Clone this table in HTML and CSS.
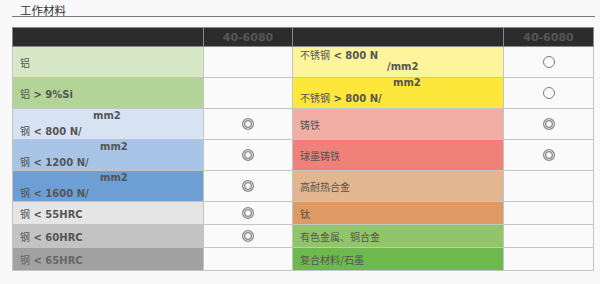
FILE: index.html
```html
<!DOCTYPE html>
<html lang="zh">
<head>
<meta charset="utf-8">
<link rel="stylesheet" href="styles.css">
</head>
<body>
<div class="page">
  <h2 class="title">工作材料</h2>
  <table class="mat">
    <colgroup><col class="c1"><col class="c2"><col class="c3"><col class="c4"></colgroup>
    <thead>
      <tr class="head"><th></th><th>40-6080</th><th></th><th>40-6080</th></tr>
    </thead>
    <tbody>
      <tr class="tall">
        <td class="al1"><span class="zh">铝</span></td>
        <td class="sym"></td>
        <td class="ss1"><span class="l1"><span class="zh">不锈钢</span> &lt; 800 N</span><span class="l2 pad-r1">/mm2</span></td>
        <td class="sym"><svg class="ic" viewBox="0 0 14 14"><circle cx="7" cy="7" r="5.5"/></svg></td>
      </tr>
      <tr class="tall">
        <td class="al2"><span class="zh">铝</span> &gt; 9%Si</td>
        <td class="sym"></td>
        <td class="ss2"><span class="up pad-r2">mm2</span><span class="dn"><span class="zh">不锈钢</span> &gt; 800 N/</span></td>
        <td class="sym"><svg class="ic" viewBox="0 0 14 14"><circle cx="7" cy="7" r="5.5"/></svg></td>
      </tr>
      <tr class="tall">
        <td class="st1"><span class="up pad-a">mm2</span><span class="dn"><span class="zh">钢</span> &lt; 800 N/</span></td>
        <td class="sym"><svg class="ic dbl" viewBox="0 0 14 14"><circle cx="7" cy="7" r="5.4"/><circle cx="7" cy="7" r="3.3"/></svg></td>
        <td class="ci1"><span class="zh">铸铁</span></td>
        <td class="sym"><svg class="ic dbl" viewBox="0 0 14 14"><circle cx="7" cy="7" r="5.4"/><circle cx="7" cy="7" r="3.3"/></svg></td>
      </tr>
      <tr class="tall">
        <td class="st2"><span class="up pad-b">mm2</span><span class="dn"><span class="zh">钢</span> &lt; 1200 N/</span></td>
        <td class="sym"><svg class="ic dbl" viewBox="0 0 14 14"><circle cx="7" cy="7" r="5.4"/><circle cx="7" cy="7" r="3.3"/></svg></td>
        <td class="ci2"><span class="zh">球墨铸铁</span></td>
        <td class="sym"><svg class="ic dbl" viewBox="0 0 14 14"><circle cx="7" cy="7" r="5.4"/><circle cx="7" cy="7" r="3.3"/></svg></td>
      </tr>
      <tr class="tall">
        <td class="st3"><span class="up pad-b">mm2</span><span class="dn"><span class="zh">钢</span> &lt; 1600 N/</span></td>
        <td class="sym"><svg class="ic dbl" viewBox="0 0 14 14"><circle cx="7" cy="7" r="5.4"/><circle cx="7" cy="7" r="3.3"/></svg></td>
        <td class="hr"><span class="zh">高耐热合金</span></td>
        <td class="sym"></td>
      </tr>
      <tr class="short">
        <td class="h55"><span class="zh">钢</span> &lt; 55HRC</td>
        <td class="sym"><svg class="ic dbl" viewBox="0 0 14 14"><circle cx="7" cy="7" r="5.4"/><circle cx="7" cy="7" r="3.3"/></svg></td>
        <td class="ti"><span class="zh">钛</span></td>
        <td class="sym"></td>
      </tr>
      <tr class="short">
        <td class="h60"><span class="zh">钢</span> &lt; 60HRC</td>
        <td class="sym"><svg class="ic dbl" viewBox="0 0 14 14"><circle cx="7" cy="7" r="5.4"/><circle cx="7" cy="7" r="3.3"/></svg></td>
        <td class="nf"><span class="zh">有色金属、铜合金</span></td>
        <td class="sym"></td>
      </tr>
      <tr class="short">
        <td class="h65"><span class="zh">钢</span> &lt; 65HRC</td>
        <td class="sym"></td>
        <td class="cm"><span class="zh">复合材料/石墨</span></td>
        <td class="sym"></td>
      </tr>
    </tbody>
  </table>
</div>
</body>
</html>
```

FILE: styles.css
```css
html, body {
  margin: 0;
  padding: 0;
  background: #f9f9f9;
}

.page {
  padding: 4px 5px 0 12px;
  font-family: "DejaVu Sans", "Noto Sans CJK SC", sans-serif;
  color: #555;
}

.title {
  margin: 0;
  padding: 0 0 0 8px;
  height: 12px;
  line-height: 12px;
  font-family: "Noto Sans CJK SC", sans-serif;
  font-size: 11.5px;
  font-weight: normal;
  color: #333;
  border-bottom: 1px solid #7a7a7a;
}

.mat {
  margin-top: 10px;
  width: 581px;
  border-collapse: collapse;
  table-layout: fixed;
  font-size: 10px;
  font-weight: bold;
}

.c1 { width: 191px; }
.c2 { width: 89px; }
.c3 { width: 211px; }
.c4 { width: 90px; }

.mat th, .mat td {
  border: 1px solid #c4c4c4;
  padding: 0 0 0 7px;
  text-align: left;
  vertical-align: middle;
}

.head th {
  height: 18px;
  background: #2c2c2c;
  color: #565656;
  font-size: 11px;
  text-align: center;
  padding: 0;
  border-color: #8a8a8a;
}

.tall td { height: 30px; }
.short td { height: 22px; }

.zh {
  font-family: "Noto Sans CJK SC", sans-serif;
  font-weight: normal;
}

.mat td.sym {
  background: #fafafa;
  text-align: center;
  padding: 0;
  line-height: 0;
}

.ic {
  width: 14px;
  height: 14px;
  fill: none;
  stroke: #7c7c7c;
  stroke-width: 1;
}

.ic.dbl {
  stroke: #8a8a8a;
  stroke-width: 1.3;
}

.up, .dn, .l1, .l2 {
  display: block;
  white-space: nowrap;
}

.up { line-height: 14px; }
.dn { line-height: 15px; }
.l1 { line-height: 10px; margin-top: -2px; }
.l2 { line-height: 12px; }

.pad-a { padding-left: 73px; }
.pad-b { padding-left: 80px; }
.pad-r1 { padding-left: 87px; }
.pad-r2 { padding-left: 93px; }

.ss2 .up { line-height: 13px; margin-top: -2px; }
.ss2 .dn { line-height: 18px; }

.al1 { background: #d6e8c6; }
.al2 { background: #b2d597; }
.st1 { background: #d7e3f3; }
.st2 { background: #a8c4e6; }
.st3 { background: #6d9fd5; }
.h55 { background: #e5e5e5; }
.h60 { background: #c3c3c3; }
.h65 { background: #a1a1a1; color: #666; }

.ss1 { background: #fdf49c; }
.ss2 { background: #fde73b; }
.ci1 { background: #f2aea4; }
.ci2 { background: #ef817a; }
.hr  { background: #e2b68e; }
.ti  { background: #df9a63; }
.nf  { background: #91c56c; }
.cm  { background: #6db94d; }
```
